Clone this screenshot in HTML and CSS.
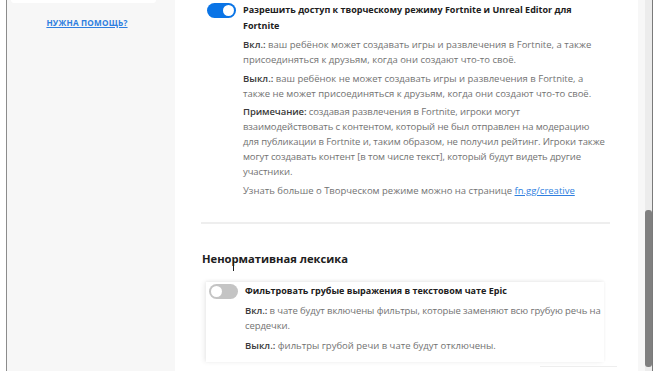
FILE: index.html
```html
<!DOCTYPE html>
<html lang="ru">
<head>
  <meta charset="UTF-8" />
  <meta name="viewport" content="width=device-width, initial-scale=1" />
  <title>Родительский контроль</title>
  <link rel="stylesheet" href="styles.css">
</head>
<body>

  <div class="edge"></div>

  <!-- Боковая панель -->
  <aside class="sidebar">
    <div class="side-card"></div>
    <a class="help" href="#">НУЖНА ПОМОЩЬ?</a>
  </aside>

  <main class="content">
    <div class="setting">
      <span class="toggle on"><span class="knob"></span></span>
      <div class="setting-text">
        <h3>Разрешить доступ к творческому режиму Fortnite и Unreal Editor для<br>Fortnite</h3>
        <p><b>Вкл.:</b> ваш ребёнок может создавать игры и развлечения в Fortnite, а также<br>присоединяться к друзьям, когда они создают что-то своё.</p>
        <p><b>Выкл.:</b> ваш ребёнок не может создавать игры и развлечения в Fortnite, а<br>также не может присоединяться к друзьям, когда они создают что-то своё.</p>
        <p class="note"><b>Примечание:</b> создавая развлечения в Fortnite, игроки могут<br>взаимодействовать с контентом, который не был отправлен на модерацию<br>для публикации в Fortnite и, таким образом, не получил рейтинг. Игроки также<br>могут создавать контент [в том числе текст], который будут видеть другие<br>участники.</p>
        <p>Узнать больше о Творческом режиме можно на странице <a href="#">fn.gg/creative</a></p>
      </div>
    </div>

    <hr class="divider">

    <h2 class="section-title">Ненормативная лексика<span class="cursor"></span></h2>

    <div class="setting card">
      <span class="toggle"><span class="knob"></span></span>
      <div class="setting-text">
        <h3>Фильтровать грубые выражения в текстовом чате Epic</h3>
        <p class="note"><b>Вкл.:</b> в чате будут включены фильтры, которые заменяют всю грубую речь на<br>сердечки.</p>
        <p><b>Выкл.:</b> фильтры грубой речи в чате будут отключены.</p>
      </div>
    </div>
    <div class="next-card"></div>
  </main>

  <div class="gutter"></div>
  <div class="scrollbar"><div class="thumb"></div></div>
  <div class="outer"></div>

</body>
</html>
```

FILE: styles.css
```css
html, body {
  margin: 0;
  padding: 0;
  height: 371px;
  overflow: hidden;
}

body {
  display: flex;
  background-color: #ffffff;
  color: #202020;
  font-family: 'Open Sans', 'Liberation Sans', sans-serif;
}

.edge {
  width: 6px;
  border-right: 1px solid #8c8c8c;
  flex-shrink: 0;
}

.sidebar {
  width: 168px;
  flex-shrink: 0;
  background-color: #f7f7f7;
  display: flex;
  flex-direction: column;
  align-items: center;
}

.side-card {
  width: 145px;
  height: 3px;
  background-color: #ffffff;
  border-radius: 0 0 4px 4px;
  margin-left: -16px;
}

.help {
  margin-top: 14px;
  margin-left: -8px;
  font-size: 8.2px;
  font-weight: bold;
  color: #2f7fe0;
  text-decoration: underline;
  letter-spacing: 0.2px;
}

.content {
  flex: 1;
  min-width: 0;
  position: relative;
  padding: 2px 28px 0 26px;
}

.setting {
  display: flex;
  gap: 7px;
  padding-left: 6px;
}

.toggle {
  flex-shrink: 0;
  width: 29px;
  height: 15px;
  border-radius: 8px;
  background-color: #c4c4c4;
  position: relative;
  margin-top: 1px;
}

.toggle .knob {
  position: absolute;
  top: 2px;
  left: 2px;
  width: 11px;
  height: 11px;
  border-radius: 50%;
  background-color: #ffffff;
}

.toggle.on {
  background-color: #0a74e6;
}

.toggle.on .knob {
  left: 16px;
}

.setting-text {
  flex: 1;
  min-width: 0;
  white-space: nowrap;
}

.setting-text h3 {
  margin: 0 0 4px;
  font-size: 9px;
  font-weight: bold;
  line-height: 15.5px;
  color: #202020;
}

.setting-text p {
  margin: 0 0 3.5px;
  font-size: 9.5px;
  line-height: 15px;
  color: #727272;
}

.setting-text p.note {
  letter-spacing: -0.1px;
}

.setting-text p b {
  font-weight: 600;
  color: #3a3a3a;
}

.setting-text a {
  color: #2f7fe0;
  text-decoration: underline;
}

.divider {
  border: none;
  border-top: 2px solid #eeeeee;
  margin: 21px 0 0;
}

.section-title {
  position: relative;
  margin: 27px 0 0 1px;
  font-size: 11.2px;
  line-height: 15px;
  font-weight: bold;
  color: #202020;
}

.cursor {
  position: absolute;
  left: 31px;
  top: 9px;
  width: 1px;
  height: 11px;
  background-color: #202020;
}

.card {
  margin: 16px 0 0 5px;
  padding: 1px 0 6px 3px;
  width: 395px;
  box-shadow: -2px 0 5px rgba(0, 0, 0, 0.07), 0 -1px 3px rgba(0, 0, 0, 0.05);
}

.card p + p {
  margin-top: 5px;
}

.next-card {
  margin: 4px -7px 0 339px;
  border-top: 1px solid #eeeeee;
}

.gutter {
  width: 7px;
  flex-shrink: 0;
  background-color: #f7f7f7;
}

.scrollbar {
  width: 7px;
  flex-shrink: 0;
  background-color: #ececec;
  border-right: 1px solid #7a7a7a;
  position: relative;
}

.thumb {
  position: absolute;
  top: 210px;
  left: 0;
  width: 7px;
  height: 157px;
  border-radius: 3px;
  background-color: #808080;
}

.outer {
  width: 7px;
  flex-shrink: 0;
}
```
